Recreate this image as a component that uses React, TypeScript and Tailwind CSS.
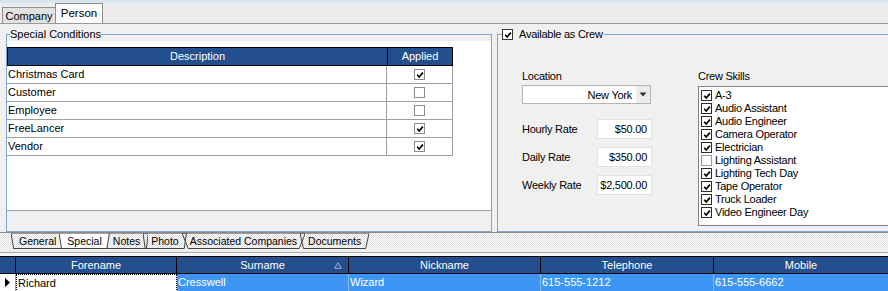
import React from 'react';

const conditions = [
  { name: 'Christmas Card', applied: true },
  { name: 'Customer', applied: false },
  { name: 'Employee', applied: false },
  { name: 'FreeLancer', applied: true },
  { name: 'Vendor', applied: true },
];

const skills = [
  { name: 'A-3', on: true },
  { name: 'Audio Assistant', on: true },
  { name: 'Audio Engineer', on: true },
  { name: 'Camera Operator', on: true },
  { name: 'Electrician', on: true },
  { name: 'Lighting Assistant', on: false },
  { name: 'Lighting Tech Day', on: true },
  { name: 'Tape Operator', on: true },
  { name: 'Truck Loader', on: true },
  { name: 'Video Engineer Day', on: true },
];

const rates = [
  { label: 'Hourly Rate', value: '$50.00' },
  { label: 'Daily Rate', value: '$350.00' },
  { label: 'Weekly Rate', value: '$2,500.00' },
];

const sheetTabs = ['General', 'Special', 'Notes', 'Photo', 'Associated Companies', 'Documents'];

const columns = [
  { name: 'Forename', w: 'w-[161px]', sort: false },
  { name: 'Surname', w: 'w-[172px]', sort: true },
  { name: 'Nickname', w: 'w-[192px]', sort: false },
  { name: 'Telephone', w: 'w-[173px]', sort: false },
  { name: 'Mobile', w: 'w-[174px]', sort: false },
];

const Tick = () => (
  <svg width="8" height="8" viewBox="0 0 8 8">
    <path d="M1.2 3.8 L3.2 6 L6.9 1.6" fill="none" stroke="#000" strokeWidth="1.7" />
  </svg>
);

const CheckBox: React.FC<{ checked: boolean; className: string }> = ({ checked, className }) => (
  <span className={`flex items-center justify-center bg-white shrink-0 ${className}`}>
    {checked && <Tick />}
  </span>
);

const Person: React.FC = () => {
  return (
    <div
      className="w-[888px] h-[291px] overflow-hidden bg-[#f0f0f0] text-black text-[11px]"
      style={{ fontFamily: '"Liberation Sans", Arial, sans-serif' }}
    >
      {/* top strip + form tabs */}
      <div className="h-[3px] bg-[#d9e4f2]" />
      <div className="h-[21px] flex items-end pl-[2px] bg-[#ececec] border-b border-[#9a9a9a]">
        <div className="w-[54px] h-[16px] flex items-center justify-center bg-[#e2e2e2] border border-b-0 border-[#8f8f8f] leading-[14px]">
          Company
        </div>
        <div className="w-[48px] h-[20px] -ml-[1px] flex items-start justify-center pt-[2px] bg-[#fbfbfb] border border-b-0 border-[#8f8f8f] leading-[14px] text-[11.5px]">
          Person
        </div>
      </div>

      {/* main panel */}
      <div className="h-[209px] pt-[4px] flex border-b border-[#8a8a8a]">
        <fieldset className="ml-[6px] w-[486px] shrink-0 border border-[#7ba6d8]">
          <legend className="ml-[3px] leading-[13px] text-[11px]">Special Conditions</legend>
          <div className="h-[170px] bg-white pt-[6px] border-b border-[#a0a0a0]">
            <div className="w-[446px]">
              <div className="flex h-[19px] bg-[#234f8e] text-white border border-black leading-[17px]">
                <div className="w-[380px] text-center border-r border-black">Description</div>
                <div className="flex-1 text-center">Applied</div>
              </div>
              {conditions.map((c) => (
                <div key={c.name} className="flex h-[18px] border-b border-[#a0a0a0] leading-[17px]">
                  <div className="w-[380px] pl-[1px] border-r border-[#a0a0a0]">{c.name}</div>
                  <div className="flex-1 flex items-center justify-center border-r border-[#a0a0a0]">
                    <CheckBox checked={c.applied} className="w-[11px] h-[11px] border border-[#8c8c8c]" />
                  </div>
                </div>
              ))}
            </div>
          </div>
          <div className="h-[17px] bg-[#f0f0f0]" />
        </fieldset>

        <fieldset className="ml-[5px] w-[400px] shrink-0 border border-[#7ba6d8] text-[11px] tracking-[-0.25px]">
          <legend className="ml-[4px] leading-[13px] flex items-center gap-[6px] pr-[1px]">
            <CheckBox checked className="w-[11px] h-[11px] border border-[#333]" />
            <span>Available as Crew</span>
          </legend>
          <div className="h-[187px] flex">
            <div className="w-[200px] pl-[24px] pt-[28px] shrink-0">
              <div className="leading-[14px]">Location</div>
              <div className="mt-[2px] w-[129px] h-[19px] flex items-center bg-white border border-[#b4b4b4]">
                <span className="flex-1 text-right pr-[4px] leading-[14px]">New York</span>
                <span className="w-[14px] h-[17px] flex items-center justify-center bg-[#ececec]">
                  <svg width="8" height="5" viewBox="0 0 8 5">
                    <path d="M0.5 0.5 H7.5 L4 4.5 Z" fill="#333" />
                  </svg>
                </span>
              </div>
              <div className="mt-[15px] flex flex-col gap-[8px]">
                {rates.map((r) => (
                  <div key={r.label} className="flex items-center h-[20px]">
                    <span className="w-[75px] leading-[14px]">{r.label}</span>
                    <div className="w-[55px] h-[20px] flex items-center justify-end overflow-hidden whitespace-nowrap bg-white border border-[#e1e1e1] pr-[4px] leading-[14px]">
                      {r.value}
                    </div>
                  </div>
                ))}
              </div>
            </div>
            <div className="pt-[28px] flex-1">
              <div className="leading-[14px]">Crew Skills</div>
              <div className="mt-[3px] h-[140px] bg-white border border-[#858585] pt-[2px] pl-[2px]">
                {skills.map((s) => (
                  <div key={s.name} className="flex items-center h-[13px] gap-[3px] leading-[13px]">
                    <CheckBox
                      checked={s.on}
                      className={s.on ? 'w-[11px] h-[11px] border border-[#2d2d2d]' : 'w-[11px] h-[11px] border border-[#9a9a9a]'}
                    />
                    <span>{s.name}</span>
                  </div>
                ))}
              </div>
            </div>
          </div>
        </fieldset>
      </div>

      {/* sheet tabs */}
      <div className="h-[20px] flex items-start pl-[11px] border-b border-[#a8a8a8] bg-[image:repeating-conic-gradient(#e2e2e2_0%_25%,#fbfbfb_0%_50%)] bg-[length:2px_2px]">
        {sheetTabs.map((t) => {
          const sel = t === 'Special';
          return (
            <div
              key={t}
              className={
                sel
                  ? 'relative z-10 -mr-[5px] h-[16px] px-[8px] flex items-center text-[10.5px] leading-[13px]'
                  : 'relative -mr-[5px] h-[16px] px-[8px] flex items-center text-[10.5px] leading-[13px]'
              }
            >
              <svg className="absolute inset-0 w-full h-full" preserveAspectRatio="none" viewBox="0 0 100 16">
                <polygon
                  points="0,0 100,0 95,15.5 5,15.5"
                  fill={sel ? '#ffffff' : 'none'}
                  stroke="#444"
                  strokeWidth="1"
                  vectorEffect="non-scaling-stroke"
                />
              </svg>
              <span className="relative">{t}</span>
            </div>
          );
        })}
      </div>
      <div className="h-[3px] bg-[#f4f4f4]" />

      {/* people grid */}
      <div className="flex h-[18px] bg-[#234f8e] text-white border-y border-black leading-[16px]">
        <div className="w-[16px] border-r border-black" />
        {columns.map((c) => (
          <div key={c.name} className={`${c.w} relative text-center border-r border-black last:border-r-0`}>
            {c.name}
            {c.sort && (
              <svg className="absolute right-[6px] top-[5px]" width="8" height="7" viewBox="0 0 8 7">
                <path d="M4 0.8 L7.3 6.3 H0.7 Z" fill="none" stroke="#9fb3d3" strokeWidth="1" />
              </svg>
            )}
          </div>
        ))}
      </div>
      <div className="flex h-[18px] leading-[16px]">
        <div className="w-[16px] flex items-center pl-[5px] bg-white border-r border-b border-[#a0a0a0]">
          <svg width="5" height="9" viewBox="0 0 5 9">
            <path d="M0 0 L5 4.5 L0 9 Z" fill="#000" />
          </svg>
        </div>
        <div className="w-[161px] bg-white border border-dotted border-black pl-[1px]">Richard</div>
        <div className="w-[172px] bg-[#3d96f5] text-white border-r border-b border-[#8fb6e0] pl-[1px]">Cresswell</div>
        <div className="w-[192px] bg-[#3d96f5] text-white border-r border-b border-[#8fb6e0] pl-[1px]">Wizard</div>
        <div className="w-[173px] bg-[#3d96f5] text-white border-r border-b border-[#8fb6e0] pl-[1px]">615-555-1212</div>
        <div className="w-[174px] bg-[#3d96f5] text-white border-b border-[#8fb6e0] pl-[1px]">615-555-6662</div>
      </div>
    </div>
  );
};

export default function App() {
  return <Person />;
}
